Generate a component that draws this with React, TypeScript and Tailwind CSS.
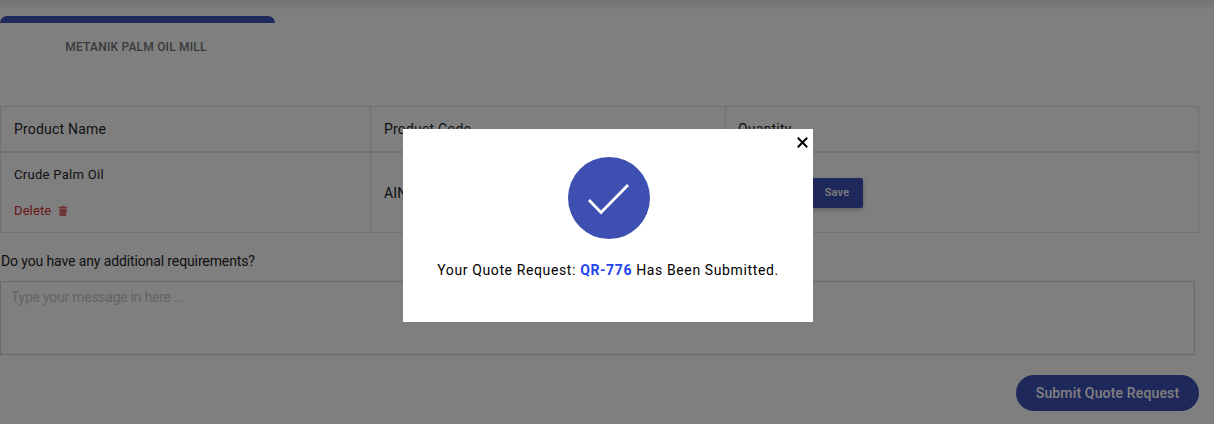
import { FaTrash } from 'react-icons/fa'

const SuccessModal = () => (
  <div className="absolute inset-0 z-10 bg-black/50 flex justify-center items-start pl-[2px] pt-[129px]">
    <div className="relative w-[410px] h-[193px] bg-white flex flex-col items-center pt-7">
      <button className="absolute top-[8px] right-[5px] w-[11px] h-[11px]">
        <svg width="11" height="11" viewBox="0 0 11 11" className="block">
          <path d="M0.8 0.8 L10.2 10.2 M10.2 0.8 L0.8 10.2" stroke="#000000" strokeWidth="2" fill="none" />
        </svg>
      </button>
      <svg width="82" height="82" viewBox="0 0 82 82" className="ml-[2px]">
        <circle cx="41" cy="41" r="41" fill="#3d50b2" />
        <polyline points="21,43 33,55.5 60,28" fill="none" stroke="#ffffff" strokeWidth="2.8" />
      </svg>
      <p className="mt-[21px] text-[14px] leading-5 tracking-[0.62px] text-black">
        Your Quote Request: <span className="font-bold text-[#2244ee]">QR-776</span> Has Been Submitted.
      </p>
    </div>
  </div>
)

export default function App() {
  return (
    <div className="relative w-[1214px] h-[424px] overflow-hidden bg-white font-['Roboto',sans-serif] text-[#212529]">
      <div className="h-0 shadow-[0_0_10px_3px_rgba(0,0,0,0.2)]" />
      <div className="pt-4">
        <div className="w-[275px]">
          <div className="h-[7px] bg-[#3f51b5] rounded-t-[8px]" />
          <div className="pt-[17px] pr-[3px] text-center text-[12px] leading-[14px] font-medium tracking-[0.2px] text-[#757575]">
            METANIK PALM OIL MILL
          </div>
        </div>
      </div>

      <table className="mt-[52px] w-[1198px] table-fixed border-collapse text-[14px] tracking-[0.2px]">
        <colgroup>
          <col className="w-[370px]" />
          <col className="w-[355px]" />
          <col className="w-[473px]" />
        </colgroup>
        <thead>
          <tr className="h-[45px] border-b-2 border-[#dee2e6]">
            <th className="border border-[#dee2e6] pl-[13px] pt-[2px] text-left font-normal">Product Name</th>
            <th className="border border-[#dee2e6] pl-[13px] pt-[2px] text-left font-normal">Product Code</th>
            <th className="border border-[#dee2e6] pl-[12px] pt-[2px] text-left font-normal">Quantity</th>
          </tr>
        </thead>
        <tbody>
          <tr className="h-[81px]">
            <td className="border border-[#dee2e6] pl-[13px] align-top">
              <div className="pt-[14px] text-[13px] leading-[16px] tracking-[0.3px]">Crude Palm Oil</div>
              <div className="mt-[20px] flex items-center gap-[7px] text-[13px] leading-[16px] tracking-[0.1px] text-[#d32f2f]">
                Delete <FaTrash size={10} className="opacity-70" />
              </div>
            </td>
            <td className="border border-[#dee2e6] pl-[13px] pt-[2px]">AIN-CPO-01</td>
            <td className="border border-[#dee2e6] pl-[85px] pt-[2px]">
              <button className="w-[52px] h-[30px] rounded-[2px] bg-[#3f51b5] text-white text-[11px] font-medium shadow-[0_2px_5px_rgba(0,0,0,0.26)]">
                Save
              </button>
            </td>
          </tr>
        </tbody>
      </table>

      <p className="mt-[18px] pl-px text-[14px] leading-5 tracking-[-0.12px]">Do you have any additional requirements?</p>
      <textarea
        readOnly
        placeholder="Type your message in here ..."
        className="mt-[10px] block w-[1195px] h-[74px] border border-[#ced4da] px-[10px] pt-[5px] text-[14px] leading-5 tracking-[-0.25px] placeholder:text-[#c8c8c8] resize-none outline-none"
      />
      <div className="mt-[20px] w-[1199px] flex justify-end">
        <button className="w-[183px] h-[36px] rounded-full bg-[#3f51b5] text-white text-[14px] font-medium tracking-[0.15px]">
          Submit Quote Request
        </button>
      </div>

      <SuccessModal />
    </div>
  )
}
